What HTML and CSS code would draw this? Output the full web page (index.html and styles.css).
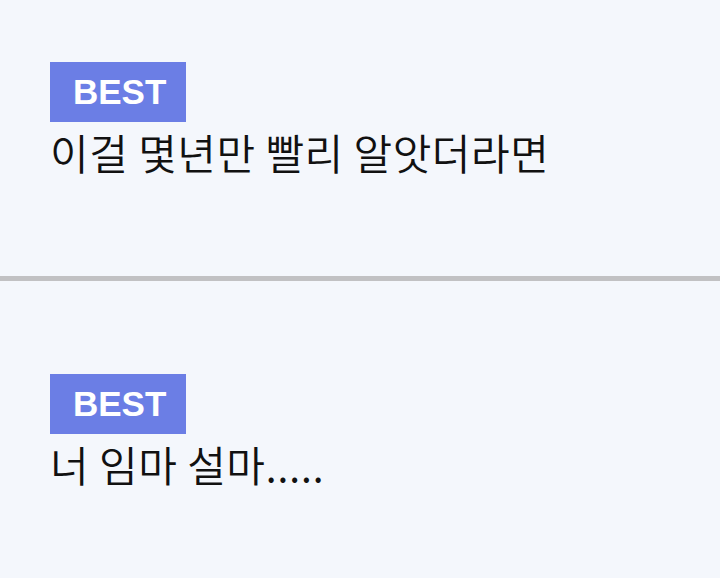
FILE: index.html
```html
<!DOCTYPE html>
<html>
    <head>
        <meta charset="utf-8">
        <title>Best posts</title>
        <link rel="stylesheet" href="styles.css">
    </head>
    <body>
        <div class="post first">
            <div class="badge">BEST</div>
            <div class="title">이걸 몇년만 빨리 알앗더라면</div>
        </div>
        <div class="post">
            <div class="badge">BEST</div>
            <div class="title">너 임마 설마.....</div>
        </div>
    </body>
</html>
```

FILE: styles.css
```css
body {
    margin: 0;
    background: #f4f7fc;
    font-family: "Liberation Sans", "Noto Sans CJK KR", sans-serif;
}
.post {
    height: 276px;
    box-sizing: border-box;
    padding: 93px 50px 0;
}
.post.first {
    padding-top: 62px;
    border-bottom: 5px solid #c1c1c3;
    height: 281px;
}
.badge {
    display: inline-block;
    height: 60px;
    line-height: 60px;
    padding: 0 20px 0 23px;
    background: #6b7ee5;
    color: #fff;
    font-size: 35px;
    font-weight: bold;
}
.title {
    font-family: "Noto Sans CJK KR", sans-serif;
    font-size: 42px;
    font-weight: 350;
    letter-spacing: 0.5px;
    line-height: 60px;
    color: #111;
}
```
